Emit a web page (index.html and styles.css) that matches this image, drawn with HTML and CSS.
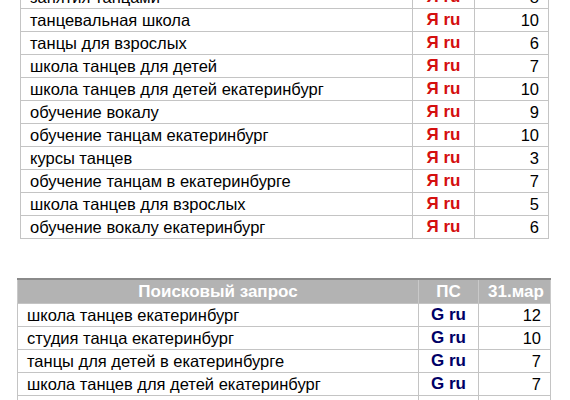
FILE: index.html
```html
<!DOCTYPE html>
<html lang="ru">
<head>
<meta charset="utf-8">
<link rel="stylesheet" href="styles.css">
</head>
<body>
<div class="page">
  <table class="grid grid-top">
    <colgroup><col class="c-q1"><col class="c-ps1"><col class="c-n1"></colgroup>
    <tbody>
      <tr><td class="q">занятия танцами</td><td class="ps ya">Я ru</td><td class="n">8</td></tr>
      <tr><td class="q">танцевальная школа</td><td class="ps ya">Я ru</td><td class="n">10</td></tr>
      <tr><td class="q">танцы для взрослых</td><td class="ps ya">Я ru</td><td class="n">6</td></tr>
      <tr><td class="q">школа танцев для детей</td><td class="ps ya">Я ru</td><td class="n">7</td></tr>
      <tr><td class="q">школа танцев для детей екатеринбург</td><td class="ps ya">Я ru</td><td class="n">10</td></tr>
      <tr><td class="q">обучение вокалу</td><td class="ps ya">Я ru</td><td class="n">9</td></tr>
      <tr><td class="q">обучение танцам екатеринбург</td><td class="ps ya">Я ru</td><td class="n">10</td></tr>
      <tr><td class="q">курсы танцев</td><td class="ps ya">Я ru</td><td class="n">3</td></tr>
      <tr><td class="q">обучение танцам в екатеринбурге</td><td class="ps ya">Я ru</td><td class="n">7</td></tr>
      <tr><td class="q">школа танцев для взрослых</td><td class="ps ya">Я ru</td><td class="n">5</td></tr>
      <tr><td class="q">обучение вокалу екатеринбург</td><td class="ps ya">Я ru</td><td class="n">6</td></tr>
    </tbody>
  </table>

  <table class="grid grid-bottom">
    <colgroup><col class="c-q2"><col class="c-ps2"><col class="c-n2"></colgroup>
    <thead>
      <tr class="head"><th class="h-q">Поисковый запрос</th><th>ПС</th><th>31.мар</th></tr>
    </thead>
    <tbody>
      <tr><td class="q">школа танцев екатеринбург</td><td class="ps go">G ru</td><td class="n">12</td></tr>
      <tr><td class="q">студия танца екатеринбург</td><td class="ps go">G ru</td><td class="n">10</td></tr>
      <tr><td class="q">танцы для детей в екатеринбурге</td><td class="ps go">G ru</td><td class="n">7</td></tr>
      <tr><td class="q">школа танцев для детей екатеринбург</td><td class="ps go">G ru</td><td class="n">7</td></tr>
      <tr><td class="q">танцевальная школа</td><td class="ps go">G ru</td><td class="n">6</td></tr>
    </tbody>
  </table>
</div>
</body>
</html>
```

FILE: styles.css
```css
html, body {
  margin: 0;
  padding: 0;
  background: #ffffff;
}

body {
  font-family: "Liberation Sans", Arial, sans-serif;
  font-size: 16.5px;
  color: #000000;
  overflow: hidden;
}

.page {
  display: flex;
  flex-direction: column;
  align-items: flex-start;
}

.grid {
  border-collapse: collapse;
  table-layout: fixed;
}

.grid td,
.grid th {
  border: 1px solid #c4c4c4;
  padding: 0 9px;
  height: 22px;
  line-height: 20px;
  white-space: nowrap;
  overflow: hidden;
}

.grid-top {
  margin-top: -15px;
  margin-left: 20px;
  width: 528px;
}

.c-q1 { width: 392px; }
.c-ps1 { width: 62px; }
.c-n1 { width: 74px; }

.grid-bottom {
  margin-top: 39px;
  margin-left: 17px;
  width: 533px;
}

.c-q2 { width: 401px; }
.c-ps2 { width: 60px; }
.c-n2 { width: 72px; }

.q {
  text-align: left;
}

.ps {
  text-align: center;
  font-weight: bold;
  font-size: 17px;
}

.ya { color: #d40f0f; }
.go { color: #000066; }

.n {
  text-align: right;
}

.head th {
  background: #b3b3b3;
  color: #ffffff;
  font-weight: bold;
  font-size: 17px;
  text-align: center;
  height: 23px;
  border-top: 2px solid #8a8a8a;
  border-left-color: #c9c9c9;
  border-right-color: #c9c9c9;
}

.head .h-q {
  text-align: center;
}
```
